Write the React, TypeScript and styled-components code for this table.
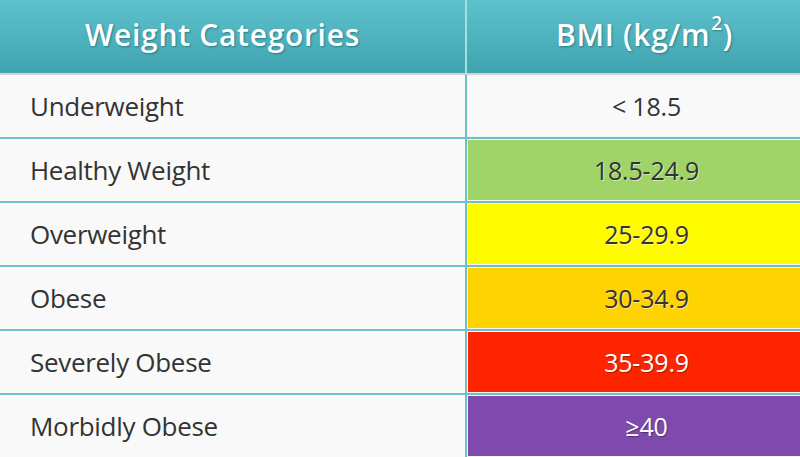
import React from 'react';
import styled, { createGlobalStyle } from 'styled-components';

type Category = {
  name: string;
  range: string;
  color?: string;
  light?: boolean;
};

const categories: Category[] = [
  { name: 'Underweight', range: '< 18.5' },
  { name: 'Healthy Weight', range: '18.5-24.9', color: '#a0d468' },
  { name: 'Overweight', range: '25-29.9', color: '#fffc00' },
  { name: 'Obese', range: '30-34.9', color: '#ffd300' },
  { name: 'Severely Obese', range: '35-39.9', color: '#ff2400', light: true },
  { name: 'Morbidly Obese', range: '≥40', color: '#8049ae', light: true },
];

const GlobalStyle = createGlobalStyle`
  html, body {
    margin: 0;
    padding: 0;
    background: #f9f9f9;
  }
`;

const App = () => {
  return (
    <>
      <GlobalStyle />
      <Table>
        <HeaderRow>
          <HeaderCell side="left">Weight Categories</HeaderCell>
          <HeaderCell side="right">
            BMI (kg/m<sup>2</sup>)
          </HeaderCell>
        </HeaderRow>
        {categories.map((c) => (
          <Row key={c.name}>
            <NameCell>{c.name}</NameCell>
            <ValueCell bg={c.color} light={c.light}>
              {c.range}
            </ValueCell>
          </Row>
        ))}
      </Table>
    </>
  );
};

const Table = styled.div`
  width: 800px;
  height: 457px;
  overflow: hidden;
  background: #f9f9f9;
  font-family: 'Open Sans', 'Noto Sans', sans-serif;
`;

const HeaderRow = styled.div`
  display: grid;
  grid-template-columns: 465px 1fr;
  height: 73px;
  background: linear-gradient(#5dc2cc, #3fa4b0);
  border-bottom: 2px solid #d2d4d4;
`;

type HeaderProps = { side: 'left' | 'right' };

const HeaderCell = styled.div<HeaderProps>`
  display: flex;
  align-items: center;
  justify-content: center;
  padding: ${({ side }) => (side === 'left' ? '0 20px 4px 0' : '0 0 4px 22px')};
  border-left: ${({ side }) => (side === 'right' ? '2px solid #a8dde2' : 'none')};
  color: #fff;
  font-size: 30px;
  font-weight: 600;
  letter-spacing: 0.7px;
  text-shadow: 1px 1px 2px rgba(0, 60, 70, 0.45);

  sup {
    font-size: 19px;
    line-height: 0;
    vertical-align: baseline;
    position: relative;
    top: -12px;
    margin-left: 1px;
  }
`;

const Row = styled.div`
  display: grid;
  grid-template-columns: 465px 1fr;
  height: 62px;
  border-bottom: 2px solid #6bc1c6;
`;

const NameCell = styled.div`
  display: flex;
  align-items: center;
  padding-left: 30px;
  color: #333;
  font-size: 26px;
  letter-spacing: -0.3px;
`;

type ValueProps = { bg?: string; light?: boolean };

const ValueCell = styled.div<ValueProps>`
  display: flex;
  align-items: center;
  justify-content: center;
  padding-left: 26px;
  border-left: 2px solid #6bc1c6;
  background: ${({ bg }) => bg ?? '#f9f9f9'};
  box-shadow: inset 1px 1px 0 #f4f4f4, inset 0 -1px 0 #f4f4f4;
  color: ${({ light }) => (light ? '#fff' : '#333')};
  font-size: 25px;
  letter-spacing: -0.2px;
  text-shadow: ${({ light }) =>
    light ? '1px 1px 1px rgba(0, 0, 0, 0.35)' : '1px 1px 0 rgba(255, 255, 255, 0.5)'};
`;

export default App;
